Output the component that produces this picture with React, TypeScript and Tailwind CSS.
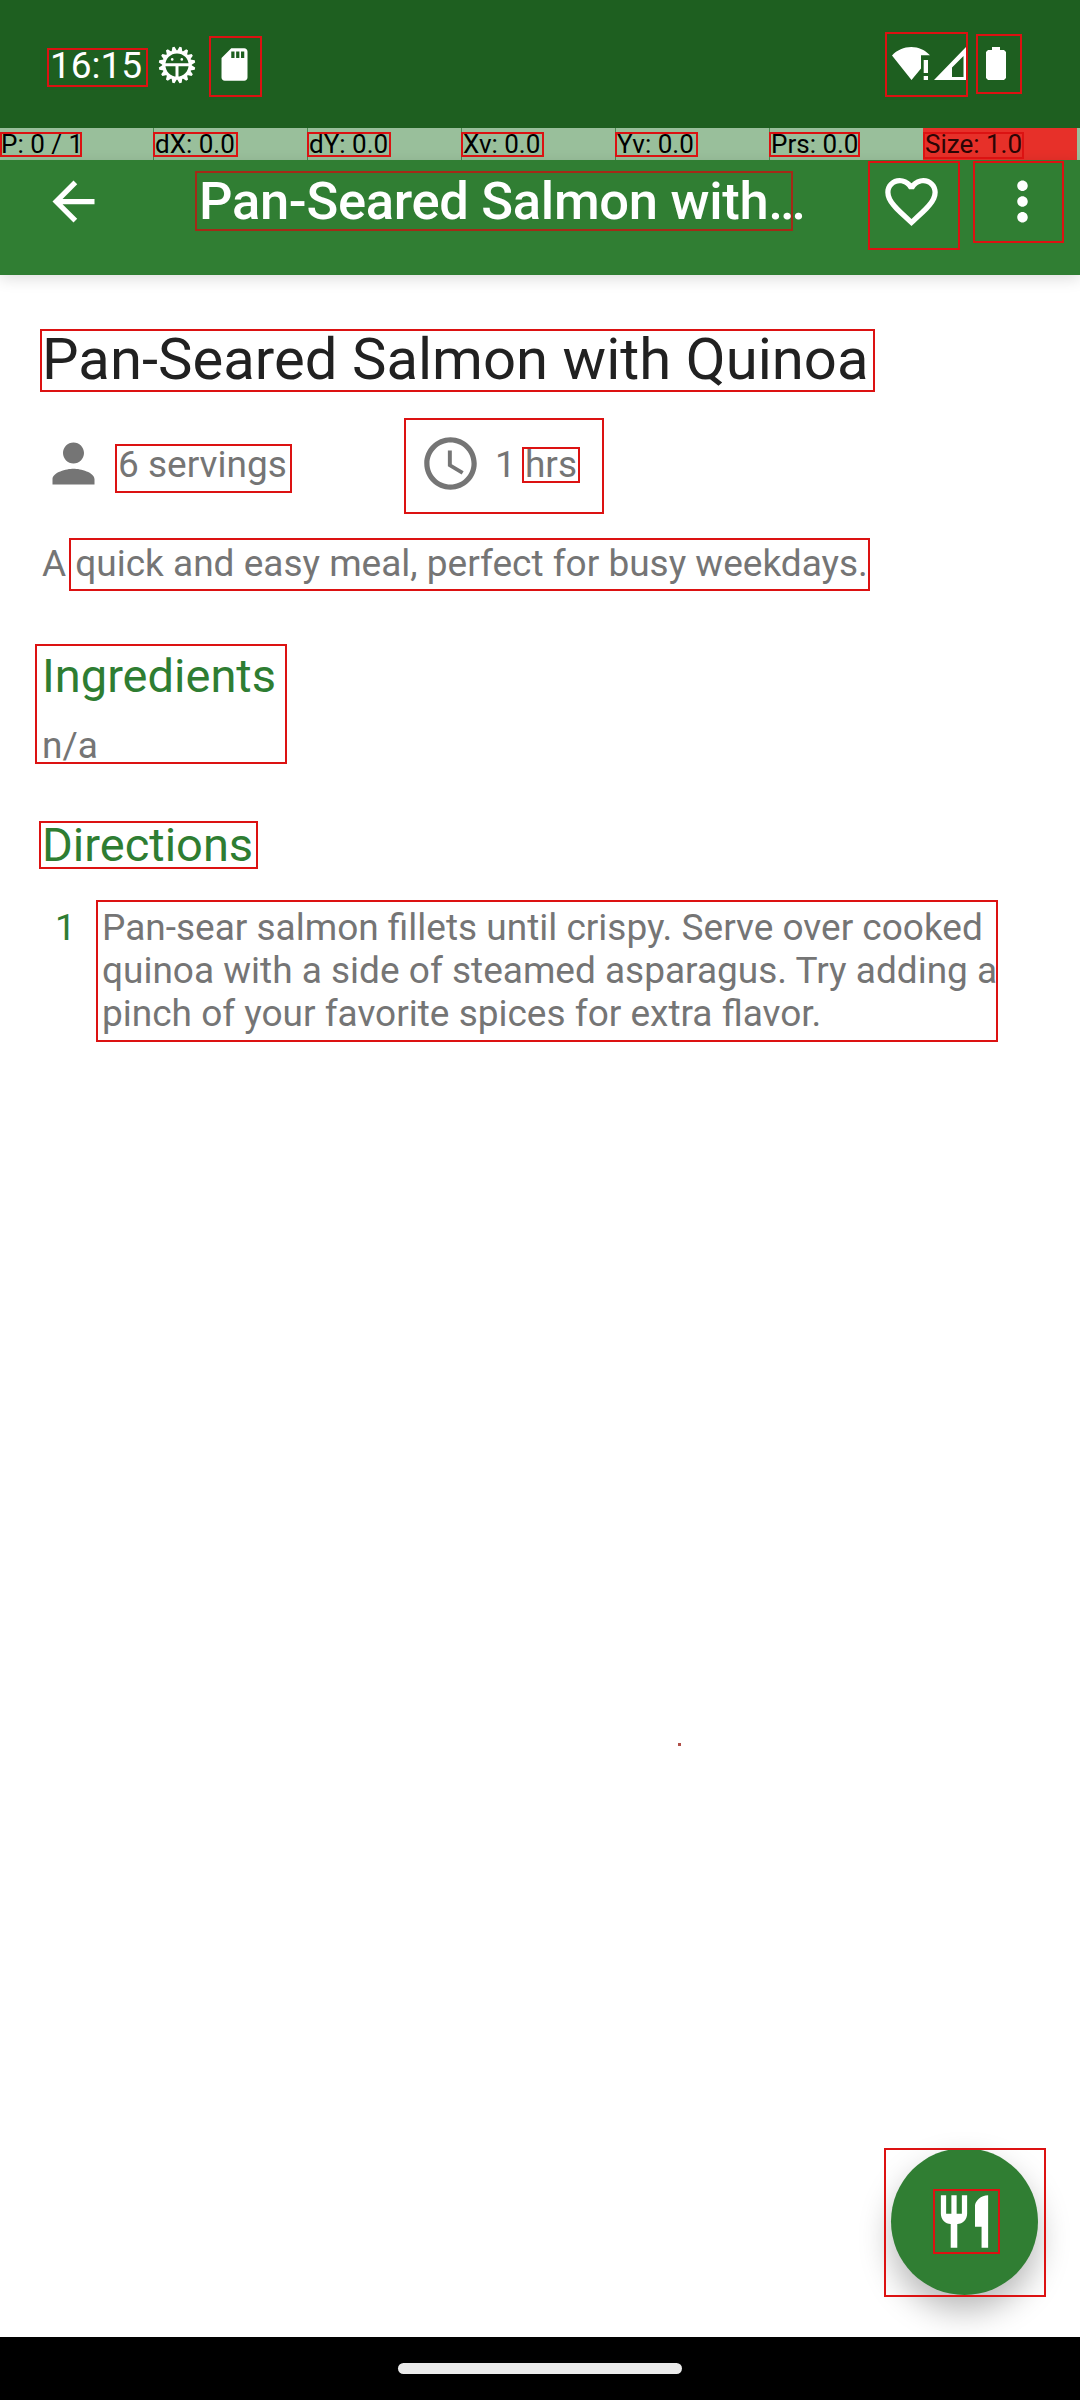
import React from "react";

type Box = [number, number, number, number];

// Outlines drawn over the screen: left, top, right, bottom.
const outlines: Box[] = [
  [47, 48, 148, 87],
  [209, 36, 262, 97],
  [885, 32, 968, 97],
  [976, 34, 1022, 94],
  [0, 132, 82, 157],
  [153, 132, 238, 157],
  [307, 132, 391, 157],
  [461, 132, 544, 157],
  [615, 132, 698, 157],
  [769, 132, 860, 157],
  [923, 132, 1024, 159],
  [868, 161, 960, 250],
  [973, 161, 1064, 243],
  [40, 329, 875, 392],
  [115, 444, 292, 493],
  [404, 418, 604, 514],
  [522, 447, 580, 483],
  [69, 538, 870, 591],
  [35, 644, 287, 764],
  [39, 821, 258, 869],
  [96, 900, 998, 1042],
  [884, 2148, 1046, 2297],
  [933, 2189, 1000, 2254],
];

const pointerCells = ["P: 0 / 1", "dX: 0.0", "dY: 0.0", "Xv: 0.0", "Yv: 0.0", "Prs: 0.0"];

function Icon({ d, className }: { d: string; className: string }) {
  return (
    <svg viewBox="0 0 24 24" fill="currentColor" className={className}>
      <path d={d} />
    </svg>
  );
}

const paths = {
  back: "M20 11H7.83l5.59-5.59L12 4l-8 8 8 8 1.41-1.41L7.83 13H20v-2z",
  heart:
    "M16.5 3c-1.74 0-3.41.81-4.5 2.09C10.91 3.81 9.24 3 7.5 3 4.42 3 2 5.42 2 8.5c0 3.78 3.4 6.86 8.55 11.54L12 21.35l1.45-1.32C18.6 15.36 22 12.28 22 8.5 22 5.42 19.58 3 16.5 3zm-4.4 15.55l-.1.1-.1-.1C7.14 14.24 4 11.39 4 8.5 4 6.5 5.5 5 7.5 5c1.54 0 3.04.99 3.57 2.36h1.87C13.46 5.99 14.96 5 16.5 5c2 0 3.5 1.5 3.5 3.5 0 2.89-3.14 5.74-7.9 10.05z",
  more: "M12 8c1.1 0 2-.9 2-2s-.9-2-2-2-2 .9-2 2 .9 2 2 2zm0 2c-1.1 0-2 .9-2 2s.9 2 2 2 2-.9 2-2-.9-2-2-2zm0 6c-1.1 0-2 .9-2 2s.9 2 2 2 2-.9 2-2-.9-2-2-2z",
  person:
    "M12 12c2.21 0 4-1.79 4-4s-1.79-4-4-4-4 1.79-4 4 1.79 4 4 4zm0 2c-2.67 0-8 1.34-8 4v2h16v-2c0-2.66-5.33-4-8-4z",
  clock:
    "M11.99 2C6.47 2 2 6.48 2 12s4.47 10 9.99 10C17.52 22 22 17.52 22 12S17.52 2 11.99 2zM12 20c-4.42 0-8-3.58-8-8s3.58-8 8-8 8 3.58 8 8-3.58 8-8 8zm.5-13H11v6l5.25 3.15.75-1.23-4.5-2.67z",
  restaurant:
    "M11 9H9V2H7v7H5V2H3v7c0 2.12 1.66 3.84 3.75 3.97V22h2.5v-9.03C11.34 12.84 13 11.12 13 9V2h-2v7zm5-3v8h2.5v8H21V2c-2.76 0-5 2.24-5 4z",
  sdCard:
    "M18 2h-8L4.02 8 4 20c0 1.1.9 2 2 2h12c1.1 0 2-.9 2-2V4c0-1.1-.9-2-2-2zm-6 6h-2V4h2v4zm3 0h-2V4h2v4zm3 0h-2V4h2v4z",
};

// Gear with 16 teeth around a droid head.
function DebugIcon() {
  const teeth = Array.from({ length: 16 }, (_, i) => i * 22.5);
  return (
    <svg viewBox="-19 -19 38 38" className="h-[38px] w-[38px]" fill="none">
      {teeth.map((a) => (
        <path key={a} d="M-2.7-14L-1.1-18.3H1.1L2.7-14Z" fill="white" transform={`rotate(${a + 11.25})`} />
      ))}
      <circle r="13.2" stroke="white" strokeWidth="3.2" />
      <path d="M-12-.2H12M0 0V13" stroke="white" strokeWidth="3" />
      <circle cx="-4.8" cy="-5.6" r="1.3" fill="white" />
      <circle cx="4.8" cy="-5.6" r="1.3" fill="white" />
    </svg>
  );
}

function StatusBar() {
  return (
    <div className="flex h-32 items-start justify-between bg-[#1e5f20] text-white">
      <div className="flex pl-[50px] pt-[44px]">
        <span className="w-[108px] text-[37px] leading-[44px]">16:15</span>
        <div className="pt-[2px]">
          <DebugIcon />
        </div>
        <Icon d={paths.sdCard} className="ml-[19px] mt-[1px] h-[39px] w-[39px]" />
      </div>
      <div className="flex pr-[74px] pt-[47px]">
        <svg viewBox="0 0 38 33" className="h-[33px] w-[38px]" fill="white">
          <path d="M0 8.5C5 3 12 0 19.3 0S33 3 38 8.3H29V21.5L19.5 33Z" />
          <path d="M31.7 13H36V26H31.7ZM31.7 29H36V33H31.7Z" />
        </svg>
        <svg viewBox="0 0 32 33" className="ml-1 h-[33px] w-[32px]" fill="white">
          <path fillRule="evenodd" d="M0 33L32 0V33ZM18 30H29.5V9L18 20.5Z" />
        </svg>
        <svg viewBox="0 0 20 33" className="ml-5 h-[33px] w-[20px]" fill="white">
          <path d="M6 0H14V3H18L20 5V31L18 33H2L0 31V5L2 3H6Z" />
        </svg>
      </div>
    </div>
  );
}

function PointerBar() {
  return (
    <div className="flex h-8 bg-[#99bf9b] text-[26px] leading-8 text-black">
      {pointerCells.map((t) => (
        <div key={t} className="w-[154px] border-r border-[#4c8a4f] pl-[1px]">
          {t}
        </div>
      ))}
      <div className="-ml-px w-[154px] bg-[#e73029] pl-[2px] text-[#2b0505]">Size: 1.0</div>
    </div>
  );
}

export default function App() {
  return (
    <div className="relative flex h-[2400px] w-[1080px] flex-col overflow-hidden bg-white font-['Roboto',sans-serif] text-[37px] leading-[43px] text-[#757575]">
      <StatusBar />
      <PointerBar />
      <header className="relative flex h-[115px] items-start bg-[#307e33] pl-[42px] pt-[10px] text-white shadow-[0_4px_14px_rgba(0,0,0,0.13)]">
        <Icon d={paths.back} className="h-[63px] w-[63px]" />
        <h1 className="ml-[94px] w-[681px] text-[52.5px] font-medium leading-[62px] tracking-[-0.3px]">
          Pan-Seared Salmon with…
        </h1>
        <Icon d={paths.heart} className="h-[63px] w-[63px]" />
        <Icon d={paths.more} className="ml-[48px] h-[63px] w-[63px]" />
      </header>

      <main className="flex-1 px-[42px] pt-[48px]">
        <h2 className="whitespace-nowrap text-[58px] leading-[72px] tracking-[0.03px] text-[#212121]">
          Pan-Seared Salmon with Quinoa
        </h2>
        <div className="mt-[37px] flex h-[63px] items-center">
          <Icon d={paths.person} className="h-[63px] w-[63px]" />
          <span className="ml-[13px] w-[301px] pt-px">6 servings</span>
          <Icon d={paths.clock} className="h-[63px] w-[63px]" />
          <span className="ml-[13px] pt-px">1 hrs</span>
        </div>
        <p className="mt-[47px] whitespace-nowrap">A quick and easy meal, perfect for busy weekdays.</p>
        <h3 className="mt-[63px] text-[47px] leading-[56px] text-[#2e7d32]">Ingredients</h3>
        <p className="mt-[20px]">n/a</p>
        <h3 className="mt-[50px] text-[47px] leading-[56px] text-[#2e7d32]">Directions</h3>
        <div className="mt-[33px] flex">
          <span className="w-[60px] pl-[13px] text-[#2e7d32]">1</span>
          <p className="whitespace-nowrap">
            Pan-sear salmon fillets until crispy. Serve over cooked
            <br />
            quinoa with a side of steamed asparagus. Try adding a
            <br />
            pinch of your favorite spices for extra flavor.
          </p>
        </div>
      </main>

      <button className="absolute left-[891px] top-[2148px] flex h-[147px] w-[147px] items-center justify-center rounded-full bg-[#307e33] text-white shadow-[0_16px_32px_rgba(0,0,0,0.28)]">
        <Icon d={paths.restaurant} className="h-[63px] w-[63px]" />
      </button>

      <nav className="relative flex h-[63px] justify-center bg-black pt-[26px]">
        <div className="h-[11px] w-[284px] rounded-full bg-[#ebebeb]" />
      </nav>

      <div className="pointer-events-none absolute inset-0">
        {outlines.map(([l, t, r, b], i) => (
          <div
            key={i}
            className="absolute border-2 border-[#dc1212]"
            style={{ left: l, top: t, width: r - l, height: b - t }}
          />
        ))}
        <div className="absolute left-[195px] top-[171px] h-[60px] w-[598px] border-2 border-[#a32a17]" />
        <div className="absolute left-[678px] top-[1743px] h-[3px] w-[3px] bg-[#b05048]" />
      </div>
    </div>
  );
}
